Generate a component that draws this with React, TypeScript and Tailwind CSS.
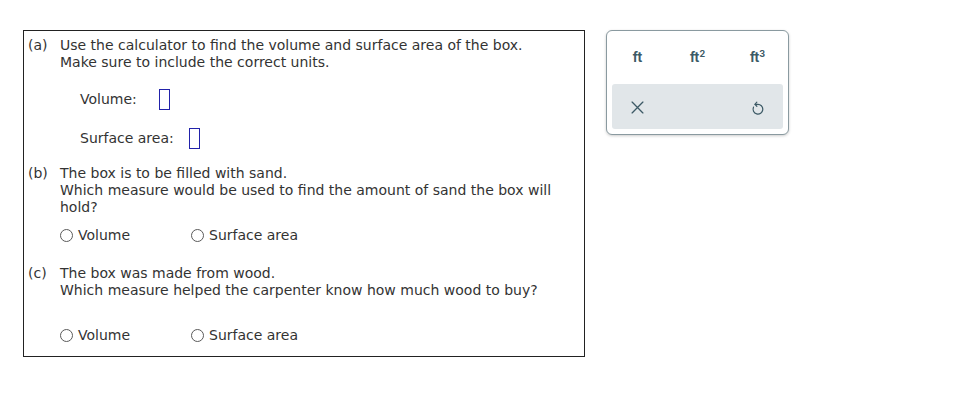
import React from 'react';

const Radio = ({ label }: { label: string }) => (
    <label className="flex items-center gap-[5px]">
        <span className="w-[13px] h-[13px] rounded-full border border-[#5a5a5a] bg-white inline-block" />
        <span>{label}</span>
    </label>
);

const AnswerBox = ({ className }: { className?: string }) => (
    <span className={`inline-block w-[11px] h-[21px] border border-[#2222aa] bg-white align-middle ${className ?? ''}`} />
);

const Part = ({ tag, children }: { tag: string; children: React.ReactNode }) => (
    <div className="flex">
        <div className="w-[33px] shrink-0 pl-[1px]">{tag}</div>
        <div className="flex-1">{children}</div>
    </div>
);

export default function App() {
    return (
        <div className="w-[957px] h-[405px] bg-white flex items-start gap-[21px] pl-[23px] pt-[30px] text-[14px] leading-[17px] text-[#333]" style={{ fontFamily: '"DejaVu Sans", Verdana, sans-serif' }}>
            <div className="w-[562px] h-[327px] border border-[#222] pl-[3px] pr-[26px] pt-[6px]">
                <Part tag="(a)">
                    <div>Use the calculator to find the volume and surface area of the box.</div>
                    <div>Make sure to include the correct units.</div>
                    <div className="flex items-center mt-[17px] ml-[20px] h-[22px]">
                        <span>Volume:</span>
                        <AnswerBox className="ml-[22px]" />
                    </div>
                    <div className="flex items-center mt-[17px] ml-[20px] h-[22px]">
                        <span>Surface area:</span>
                        <AnswerBox className="ml-[15px]" />
                    </div>
                </Part>
                <div className="mt-[16px]">
                    <Part tag="(b)">
                        <div>The box is to be filled with sand.</div>
                        <div>Which measure would be used to find the amount of sand the box will hold?</div>
                        <div className="flex mt-[11px]">
                            <div className="w-[131px]"><Radio label="Volume" /></div>
                            <Radio label="Surface area" />
                        </div>
                    </Part>
                </div>
                <div className="mt-[21px]">
                    <Part tag="(c)">
                        <div>The box was made from wood.</div>
                        <div>Which measure helped the carpenter know how much wood to buy?</div>
                        <div className="flex mt-[28px]">
                            <div className="w-[131px]"><Radio label="Volume" /></div>
                            <Radio label="Surface area" />
                        </div>
                    </Part>
                </div>
            </div>
            <div className="w-[183px] h-[105px] border border-[#8a9aa0] rounded-[6px] shadow-[0_1px_3px_rgba(0,0,0,0.2)] bg-white p-[5px] flex flex-col" style={{ fontFamily: 'Inter, "Open Sans", sans-serif' }}>
                <div className="grid grid-cols-3 h-[48px] items-center pb-[6px] text-[13px] font-bold text-[#3d5a66]">
                    <div className="text-center pr-[6px]">ft</div>
                    <div className="text-center">ft<sup className="text-[9px]">2</sup></div>
                    <div className="text-center pl-[6px]">ft<sup className="text-[9px]">3</sup></div>
                </div>
                <div className="flex-1 bg-[#e1e6e9] rounded-[3px] grid grid-cols-3 items-center text-[#3d5a66]">
                    <div className="flex justify-center pr-[6px] pt-[2px]">
                        <svg width="13" height="13" viewBox="0 0 12 12" fill="none" stroke="currentColor" strokeWidth="1.2" strokeLinecap="round">
                            <path d="M1 1l10 10M11 1L1 11" />
                        </svg>
                    </div>
                    <div />
                    <div className="flex justify-center pl-[6px] pt-[2px]">
                        <svg width="13" height="16" viewBox="0 0 12 14" fill="none" stroke="currentColor" strokeWidth="1.1" strokeLinecap="round" strokeLinejoin="round">
                            <path d="M2.3 6.2A4.5 4.5 0 1 0 6 3.6H3.8" />
                            <path d="M5.4 1.6L3.6 3.6l1.8 1.8" />
                        </svg>
                    </div>
                </div>
            </div>
        </div>
    );
}
